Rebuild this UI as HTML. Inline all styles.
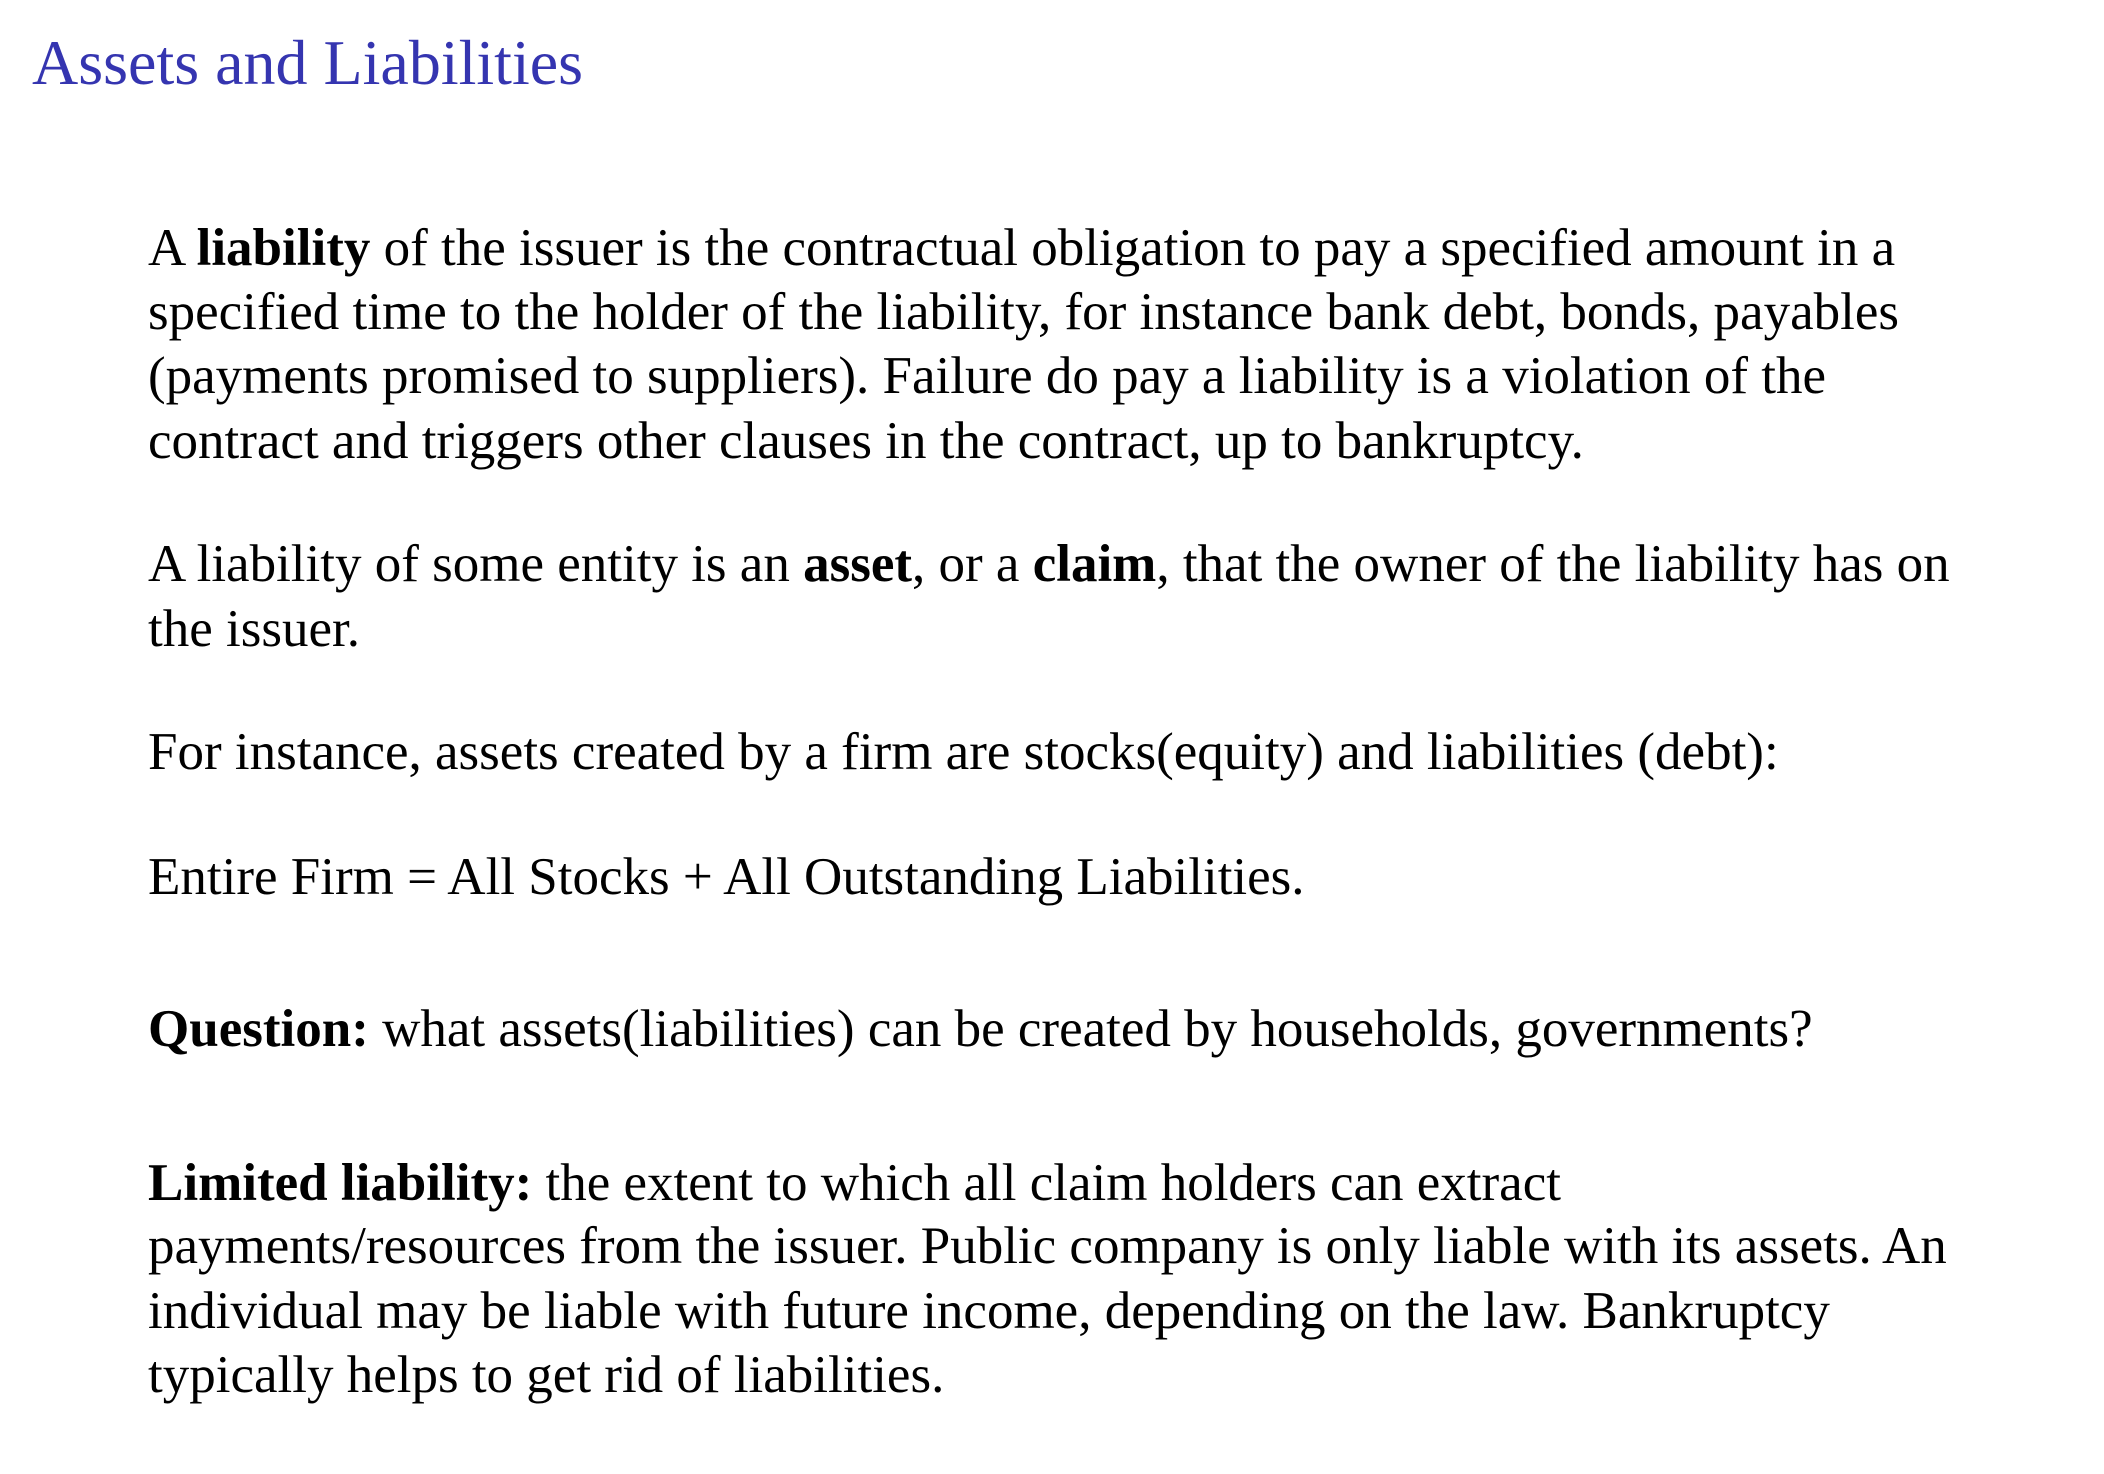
<!DOCTYPE html>
<html><head><meta charset="utf-8"><style>
html,body{margin:0;padding:0;background:#fff;width:2104px;height:1474px;overflow:hidden}
body{position:relative;font-family:"Liberation Serif","Times New Roman",serif;color:#000}
.t{position:absolute;left:32px;top:31px;font-size:64px;line-height:64px;color:#3535b0;white-space:nowrap}
.l{position:absolute;left:148px;font-size:53px;line-height:64px;white-space:nowrap}
</style></head><body>
<div class="t">Assets and Liabilities</div>
<div class="l" style="top:216px">A <b>liability</b> of the issuer is the contractual obligation to pay a specified amount in a</div>
<div class="l" style="top:280px">specified time to the holder of the liability, for instance bank debt, bonds, payables</div>
<div class="l" style="top:344px">(payments promised to suppliers). Failure do pay a liability is a violation of the</div>
<div class="l" style="top:409px">contract and triggers other clauses in the contract, up to bankruptcy.</div>
<div class="l" style="top:532px">A liability of some entity is an <b>asset</b>, or a <b>claim</b>, that the owner of the liability has on</div>
<div class="l" style="top:597px">the issuer.</div>
<div class="l" style="top:720px">For instance, assets created by a firm are stocks(equity) and liabilities (debt):</div>
<div class="l" style="top:845px">Entire Firm = All Stocks + All Outstanding Liabilities.</div>
<div class="l" style="top:997px"><b>Question:</b> what assets(liabilities) can be created by households, governments?</div>
<div class="l" style="top:1151px"><b>Limited liability:</b> the extent to which all claim holders can extract</div>
<div class="l" style="top:1214px">payments/resources from the issuer. Public company is only liable with its assets. An</div>
<div class="l" style="top:1279px">individual may be liable with future income, depending on the law. Bankruptcy</div>
<div class="l" style="top:1343px">typically helps to get rid of liabilities.</div>
</body></html>
